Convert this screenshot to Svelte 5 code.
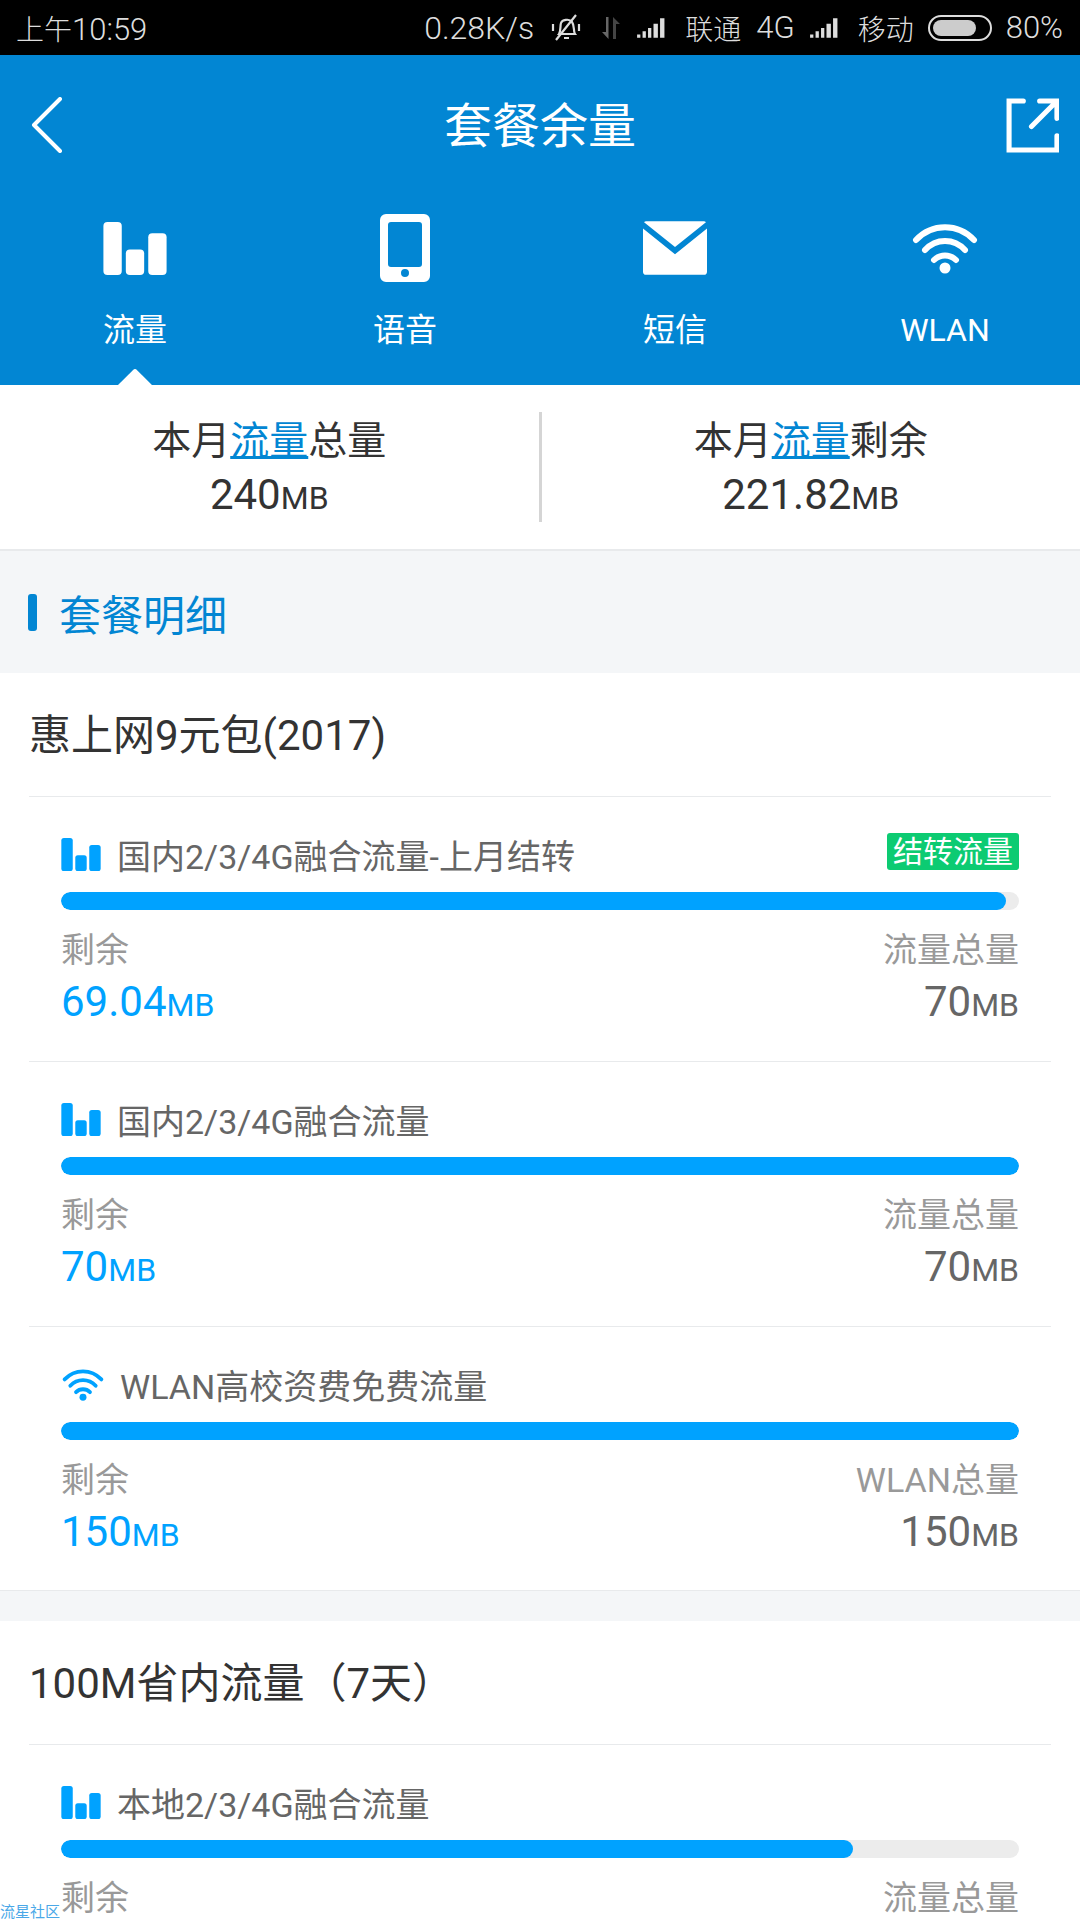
<script>
  const tabs = [
    { name: "流量", icon: "bars" },
    { name: "语音", icon: "phone" },
    { name: "短信", icon: "mail" },
    { name: "WLAN", icon: "wifi" },
  ];

  const plans = [
    {
      title: "惠上网9元包(2017)",
      rows: [
        { icon: "bars", name: "国内2/3/4G融合流量-上月结转", tag: "结转流量", left: "69.04", total: "70", totalName: "流量总量", pct: 98.6 },
        { icon: "bars", name: "国内2/3/4G融合流量", left: "70", total: "70", totalName: "流量总量", pct: 100 },
        { icon: "wifi", name: "WLAN高校资费免费流量", left: "150", total: "150", totalName: "WLAN总量", pct: 100 },
      ],
    },
    {
      title: "100M省内流量（7天）",
      rows: [
        // the numbers of this row are below the fold
        { icon: "bars", name: "本地2/3/4G融合流量", totalName: "流量总量", pct: 82.7 },
      ],
    },
  ];
</script>

{#snippet bars(cls)}
  <svg class={cls} viewBox="0 0 62 52">
    <rect x="0" y="0" width="18" height="52" rx="4" />
    <rect x="22" y="27" width="18" height="25" rx="4" />
    <rect x="44" y="11" width="18" height="41" rx="4" />
  </svg>
{/snippet}

{#snippet wifi(cls)}
  <svg class={cls} viewBox="0 0 66 52" fill="none" stroke-linecap="round" stroke-width="6">
    <path d="M4 18 C20 1 46 1 62 18" />
    <path d="M13 28 C24 16 42 16 53 28" />
    <path d="M22 38 C28 32 38 32 44 38" />
    <circle cx="33" cy="46" r="5.5" class="dot" />
  </svg>
{/snippet}

{#snippet signal()}
  <svg class="signal" viewBox="0 0 32 20">
    <path d="M1 19h3v-3H1zM6 19h3v-6H6zM11 19h3V10h-3zM16 19h4V6h-4zM22 19h4V1h-4z" />
  </svg>
{/snippet}

<div class="page">
  <div class="status">
    <span class="time"><span class="cn">上午</span>10:59</span>
    <div class="status-right">
      <span class="speed">0.28K/s</span>
      <svg class="bell" viewBox="0 0 32 30" fill="none" stroke="#ddd" stroke-width="2.2">
        <path d="M9 21c2-3 1-8 2-11s8-5 11-1 1 9 3 12z" />
        <path d="M14 25h5M6 27 26 2M3 11v7M29 11v7" />
      </svg>
      <svg class="updown" viewBox="0 0 22 24">
        <path d="M6 1h2.500v22L2 16h4z" fill="#666" />
        <path d="M13 1l7 7h-4v15h-3z" fill="#444" />
      </svg>
      {@render signal()}
      <span class="carrier"><span class="cn">联通</span><span>4G</span></span>
      {@render signal()}
      <span class="cn">移动</span>
      <div class="battery"><div class="battery-fill"></div></div>
      <span>80%</span>
    </div>
  </div>

  <header>
    <div class="titlebar">
      <svg class="back" viewBox="0 0 32 56" fill="none" stroke="#fff" stroke-width="4" stroke-linecap="round" stroke-linejoin="round">
        <path d="M29 2 3 28l26 26" />
      </svg>
      <h1>套餐余量</h1>
      <svg class="share" viewBox="0 0 52 54" fill="none" stroke="#fff" stroke-width="5" stroke-linecap="round">
        <path d="M17 3H3v48h47V37" />
        <path d="M25 28 49 4M33 3h17v17" />
      </svg>
    </div>
    <div class="tabs">
      {#each tabs as tab, i}
        <div class="tab">
          <div class="tab-icon">
            {#if tab.icon === "bars"}
              {@render bars("tab-bars")}
            {:else if tab.icon === "phone"}
              <svg class="tab-phone" viewBox="0 0 50 68">
                <path fill-rule="evenodd" d="M6 0h38a6 6 0 0 1 6 6v56a6 6 0 0 1-6 6H6a6 6 0 0 1-6-6V6a6 6 0 0 1 6-6zM11 8a3 3 0 0 0-3 3v39a3 3 0 0 0 3 3h28a3 3 0 0 0 3-3V11a3 3 0 0 0-3-3zM25 55a4 4 0 1 0 0 8 4 4 0 0 0 0-8z" />
              </svg>
            {:else if tab.icon === "mail"}
              <svg class="tab-mail" viewBox="0 0 62 52">
                <path d="M3 0h56a3 3 0 0 1 2 1L31 25 1 1a3 3 0 0 1 2-1z" />
                <path d="M0 7l31 25L62 7v42a3 3 0 0 1-3 3H3a3 3 0 0 1-3-3z" />
              </svg>
            {:else}
              {@render wifi("tab-wifi")}
            {/if}
          </div>
          <span>{tab.name}</span>
          {#if i === 0}<div class="arrow"></div>{/if}
        </div>
      {/each}
    </div>
  </header>

  <section class="summary">
    <div class="sum-cell">
      <p>本月<u>流量</u>总量</p>
      <p class="sum-value">240<small>MB</small></p>
    </div>
    <div class="sum-split"></div>
    <div class="sum-cell">
      <p>本月<u>流量</u>剩余</p>
      <p class="sum-value">221.82<small>MB</small></p>
    </div>
  </section>

  <div class="section-head">
    <i></i>
    <span>套餐明细</span>
  </div>

  {#each plans as plan}
    <section class="plan">
      <h2>{plan.title}</h2>
      {#each plan.rows as row}
        <div class="row">
          <div class="row-head">
            {#if row.icon === "bars"}
              {@render bars("row-bars")}
            {:else}
              {@render wifi("row-wifi")}
            {/if}
            <span class="row-name">{row.name}</span>
            {#if row.tag}<span class="tag">{row.tag}</span>{/if}
          </div>
          <div class="track"><div class="fill" style="width: {row.pct}%"></div></div>
          <div class="row-foot">
            <div>
              <p class="label">剩余</p>
              {#if row.left}<p class="num left">{row.left}<small>MB</small></p>{/if}
            </div>
            <div class="right">
              <p class="label">{row.totalName}</p>
              {#if row.total}<p class="num">{row.total}<small>MB</small></p>{/if}
            </div>
          </div>
        </div>
      {/each}
    </section>
  {/each}

  <div class="watermark">流星社区</div>
</div>

<style>
  :global(body) {
    margin: 0;
    background: #f4f6f8;
  }

  .page {
    position: relative;
    width: 1080px;
    height: 1920px;
    overflow: hidden;
    font-family: Roboto, "Noto Sans CJK SC", sans-serif;
    color: #333;
  }

  p,
  h1,
  h2 {
    margin: 0;
    font-weight: 400;
  }

  .status {
    height: 55px;
    background: #000;
    color: #ddd;
    font-size: 31px;
    font-weight: 300;
    display: flex;
    align-items: center;
    justify-content: space-between;
    padding: 0 17px 0 16px;
    box-sizing: border-box;
  }

  .cn {
    font-size: 28px;
  }

  .carrier {
    display: flex;
    align-items: center;
    gap: 15px;
  }

  .status-right {
    display: flex;
    align-items: center;
    gap: 14px;
  }

  .speed {
    font-size: 32px;
    margin-right: 2px;
  }

  .bell {
    width: 32px;
    height: 30px;
    margin-right: 4px;
  }

  .updown {
    width: 22px;
    height: 24px;
  }

  .signal {
    width: 35px;
    height: 22px;
    fill: #ddd;
  }

  .battery {
    width: 64px;
    height: 26px;
    border: 2px solid #ddd;
    border-radius: 13px;
    box-sizing: border-box;
    padding: 3px;
  }

  .battery-fill {
    width: 80%;
    height: 100%;
    background: #ccc;
    border-radius: 8px;
  }

  header {
    height: 330px;
    background: #0286d3;
    color: #fff;
  }

  .titlebar {
    height: 140px;
    display: flex;
    align-items: center;
    justify-content: space-between;
    padding: 0 21px 6px 31px;
    box-sizing: border-box;
  }

  .back {
    width: 32px;
    height: 56px;
    margin-top: 6px;
  }

  .share {
    width: 53px;
    height: 55px;
    margin-top: 6px;
  }

  h1 {
    font-size: 48px;
    margin-left: 11px;
  }

  .tabs {
    display: grid;
    grid-template-columns: repeat(4, 1fr);
  }

  .tab {
    position: relative;
    height: 190px;
    display: flex;
    flex-direction: column;
    align-items: center;
    font-size: 32px;
  }

  .tab-icon {
    height: 70px;
    margin-top: 18px;
    display: flex;
    align-items: center;
    justify-content: center;
  }

  .tab-icon :global(svg) {
    fill: #fff;
  }

  .tab-icon :global(.tab-bars) {
    width: 64px;
    height: 53px;
  }

  .tab-phone {
    width: 50px;
    height: 68px;
  }

  .tab-mail {
    width: 64px;
    height: 54px;
  }

  .tab-icon :global(.tab-wifi) {
    width: 66px;
    height: 52px;
    fill: none;
    stroke: #fff;
  }

  .tab-icon :global(.tab-wifi .dot) {
    fill: #fff;
    stroke: none;
  }

  .tab span {
    margin-top: 25px;
    line-height: 44px;
  }

  .arrow {
    position: absolute;
    left: 123px;
    bottom: -12px;
    width: 24px;
    height: 24px;
    background: #fff;
    transform: rotate(45deg);
    border-radius: 3px 0 0 0;
  }

  .summary {
    position: relative;
    height: 166px;
    background: #fff;
    border-bottom: 2px solid #e8eaec;
    box-sizing: border-box;
    display: flex;
    align-items: center;
  }

  .sum-cell {
    flex: 1;
    text-align: center;
    font-size: 39px;
    line-height: 53px;
    padding-top: 6px;
  }

  .sum-cell u {
    color: #0286d3;
  }

  .sum-value {
    font-size: 42px;
  }

  .sum-value small {
    font-size: 32px;
  }

  .sum-split {
    width: 3px;
    height: 110px;
    background: #d5d5d5;
  }

  .section-head {
    height: 122px;
    display: flex;
    align-items: center;
    gap: 22px;
    padding-left: 28px;
    color: #0286d3;
    font-size: 42px;
  }

  .section-head i {
    width: 9px;
    height: 37px;
    border-radius: 3px;
    background: #0286d3;
  }

  .plan {
    background: #fff;
    padding: 0 29px;
    margin-bottom: 30px;
    border-bottom: 1px solid #e8eaec;
  }

  h2 {
    height: 123px;
    line-height: 126px;
    font-size: 42px;
    color: #333;
  }

  .row {
    height: 264px;
    border-top: 1px solid #e8eaec;
    padding: 0 32px;
  }

  .row:last-child {
    height: 263px;
  }

  .row-head {
    height: 75px;
    padding-top: 20px;
    display: flex;
    align-items: center;
    font-size: 34px;
    color: #666;
  }

  .row-head :global(.row-bars) {
    width: 40px;
    height: 33px;
    fill: #00a2ff;
    margin-right: 16px;
  }

  .row-head :global(.row-wifi) {
    width: 44px;
    height: 33px;
    stroke: #00a2ff;
    margin-right: 15px;
  }

  .row-head :global(.row-wifi .dot) {
    fill: #00a2ff;
    stroke: none;
  }

  .row-name {
    flex: 1;
  }

  .tag {
    background: #0ccb72;
    color: #fff;
    font-size: 30px;
    line-height: 37px;
    padding: 0 6px;
    border-radius: 3px;
    margin-top: -6px;
  }

  .track {
    height: 18px;
    border-radius: 9px;
    background: #ececec;
    overflow: hidden;
  }

  .fill {
    height: 100%;
    background: #00a2ff;
    border-radius: 9px;
  }

  .row-foot {
    display: flex;
    justify-content: space-between;
    margin-top: 15px;
  }

  .right {
    text-align: right;
  }

  .label {
    font-size: 34px;
    line-height: 50px;
    color: #999;
  }

  .num {
    font-size: 42px;
    line-height: 54px;
    color: #666;
  }

  .num small {
    font-size: 32px;
  }

  .num.left {
    color: #00a2ff;
  }

  .watermark {
    position: absolute;
    left: 0;
    bottom: 0;
    font-size: 15px;
    line-height: 15px;
    color: #4aa8e8;
  }
</style>
